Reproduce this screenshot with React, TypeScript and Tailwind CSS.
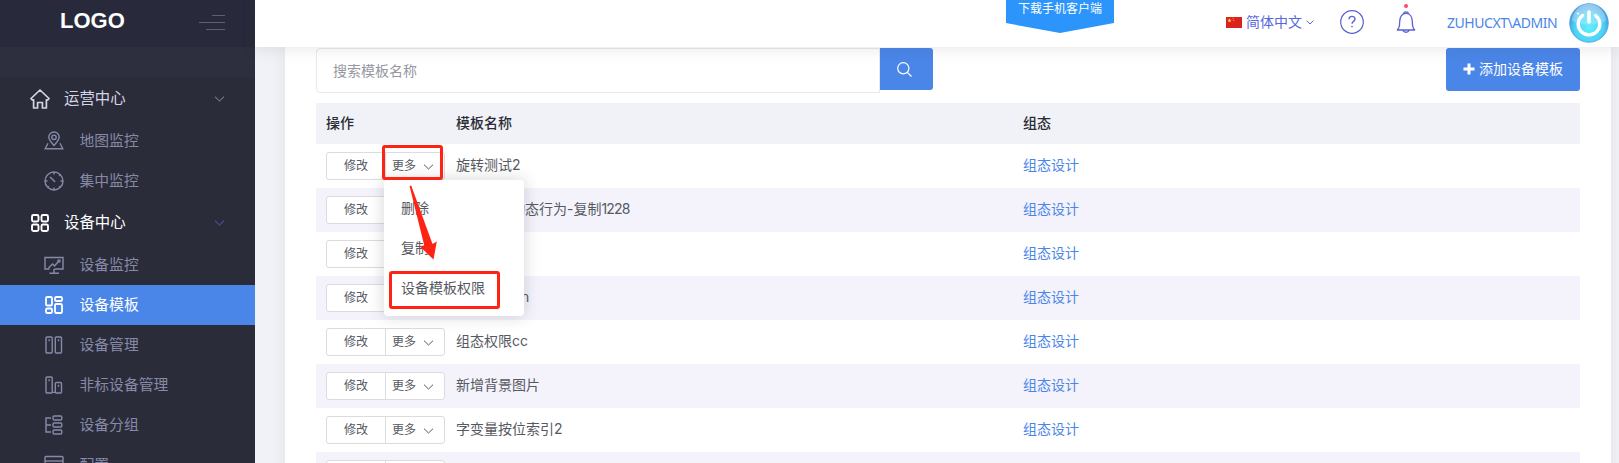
import React from "react";

type IconProps = { className?: string };

const Svg = ({ className = "", size = 20, children }: { className?: string; size?: number; children: React.ReactNode }) => (
  <svg width={size} height={size} viewBox="0 0 20 20" fill="none" stroke="currentColor" strokeWidth="1.4" className={`shrink-0 ${className}`}>
    {children}
  </svg>
);

const HomeIcon = () => (
  <Svg>
    <path strokeWidth="1.7" strokeLinejoin="round" d="M10 1 1 9.500l1 1.300h1.600V19h4v-5.500h4.800V19h4v-8.200h1.600l1-1.300z" />
  </Svg>
);
const GridIcon = () => (
  <Svg>
    <g strokeWidth="1.9">
      <rect x="2" y="2" width="6.500" height="6.500" rx="1.500" />
      <rect x="11.500" y="2" width="6.500" height="6.500" rx="1.500" />
      <rect x="2" y="11.500" width="6.500" height="6.500" rx="1.500" />
      <rect x="11.500" y="11.500" width="6.500" height="6.500" rx="1.500" />
    </g>
  </Svg>
);
const MapIcon = () => (
  <Svg>
    <path d="M10 14.500C6.500 10.500 4.800 8.600 4.800 6.200a5.200 5.200 0 0 1 10.400 0c0 2.400-1.700 4.300-5.200 8.300z" />
    <circle cx="10" cy="6.300" r="2.200" />
    <path d="M4 12.200 1.200 17.800h17.600L16 12.200" />
  </Svg>
);
const ClockIcon = () => (
  <Svg>
    <circle cx="10" cy="10" r="9" />
    <path d="M6 6l5.200 5M10 1v2.500M10 16.500V19M1 10h2.500M16.500 10H19M15.200 4.800l1-1M3.800 16.200l1-1M15.200 15.200l1 1" />
  </Svg>
);
const MonitorIcon = () => (
  <Svg>
    <path d="M5.500 14H1V2.500h18V14h-8.500M10 14v4M5.500 18.200h9.500M4.500 13l4-4 2 2 4-4.500" />
    <circle cx="15" cy="6" r="1.100" />
  </Svg>
);
const TemplateIcon = () => (
  <Svg>
    <g strokeWidth="1.8">
      <rect x="2" y="2" width="6" height="8.500" rx="1.300" />
      <rect x="11" y="2" width="7" height="4" rx="1.300" />
      <rect x="2" y="13.500" width="6" height="4.500" rx="1.300" />
      <rect x="11" y="9" width="7" height="9" rx="1.300" />
    </g>
  </Svg>
);
const ColumnsIcon = () => (
  <Svg>
    <rect x="2" y="2" width="6.200" height="16" rx="1" />
    <rect x="11.300" y="2" width="6.200" height="16" rx="1" />
    <path d="M5.200 4.200v2M14.500 4.200v2" />
  </Svg>
);
const BarsIcon = () => (
  <Svg>
    <rect x="2" y="2" width="6.200" height="16" rx="1" />
    <rect x="11.300" y="7.500" width="6.200" height="10.500" rx="1" />
    <path d="M5.200 4.200v2M14.500 9.700v2M8.200 17.400h3" />
  </Svg>
);
const TreeIcon = () => (
  <Svg>
    <path d="M7 3H2v14h5M2 10h5" />
    <rect x="9" y="1" width="8.800" height="4" rx="1.200" />
    <rect x="9" y="8" width="8.800" height="4" rx="1.200" />
    <rect x="9" y="15" width="8.800" height="4" rx="1.200" />
  </Svg>
);
const ConfigIcon = () => (
  <Svg>
    <rect x="1" y="1.500" width="18" height="16" rx="1" />
    <path d="M1 6h18" />
  </Svg>
);
const Chevron = ({ className = "" }: IconProps) => (
  <svg width="11" height="6" viewBox="0 0 11 6" fill="none" stroke="currentColor" strokeWidth="1" className={`shrink-0 ${className}`}>
    <path d="M1 .7l4.500 4.300L10 .7" />
  </svg>
);

const Section = ({ icon, label, active }: { icon: React.ReactNode; label: string; active?: boolean }) => (
  <div className={`flex h-11 shrink-0 items-center pl-[30px] pr-[30px] text-[15.4px] ${active ? "text-white" : "text-[#d3d5e5]"}`}>
    {icon}
    <span className="ml-[14px]">{label}</span>
    <Chevron className={`ml-auto ${active ? "text-[#5d5fc9]" : "text-[#8f92ae]"}`} />
  </div>
);

const Item = ({ icon, label, active }: { icon: React.ReactNode; label: string; active?: boolean }) => (
  <div className={`flex h-10 shrink-0 items-center pl-[44px] text-[14.8px] ${active ? "bg-[#4a86e8] text-white" : "text-[#868aa8]"}`}>
    {icon}
    <span className="ml-[15.500px]">{label}</span>
  </div>
);

const Sidebar = () => (
  <aside className="flex w-[255px] shrink-0 flex-col overflow-hidden bg-[#2b2c39]">
    <div className="flex h-[47px] shrink-0 items-center bg-[#282a3c] pb-[5px] pl-[60px] pr-[30px]">
      <span className="font-['Liberation_Sans'] text-[22px] font-bold leading-none text-white">LOGO</span>
      <div className="ml-auto flex flex-col items-end gap-[6px] pt-[3px]">
        <i className="h-px w-[13px] bg-[#5d5f77]" />
        <i className="h-px w-[26px] bg-[#5d5f77]" />
        <i className="h-px w-[19px] bg-[#5d5f77]" />
      </div>
    </div>
    <div className="h-[30px] shrink-0 bg-[#2d2f3e]" />
    <Section icon={<HomeIcon />} label="运营中心" />
    <Item icon={<MapIcon />} label="地图监控" />
    <Item icon={<ClockIcon />} label="集中监控" />
    <Section icon={<GridIcon />} label="设备中心" active />
    <Item icon={<MonitorIcon />} label="设备监控" />
    <Item icon={<TemplateIcon />} label="设备模板" active />
    <Item icon={<ColumnsIcon />} label="设备管理" />
    <Item icon={<BarsIcon />} label="非标设备管理" />
    <Item icon={<TreeIcon />} label="设备分组" />
    <Item icon={<ConfigIcon />} label="配置" />
  </aside>
);

const PowerAvatar = () => (
  <svg width="40" height="40" viewBox="0 0 40 40" className="shrink-0">
    <defs>
      <radialGradient id="orb" cx="50%" cy="62%" r="58%">
        <stop offset="0" stopColor="#5df0fb" />
        <stop offset=".65" stopColor="#4fd0f5" />
        <stop offset="1" stopColor="#3a94dc" />
      </radialGradient>
      <linearGradient id="gloss" x1="0" y1="0" x2="0" y2="1">
        <stop offset="0" stopColor="#fff" stopOpacity=".5" />
        <stop offset="1" stopColor="#fff" stopOpacity=".2" />
      </linearGradient>
    </defs>
    <circle cx="20" cy="20" r="19.300" fill="url(#orb)" stroke="#4a9fdc" strokeWidth=".8" />
    <path d="M3 18a17 17 0 0 1 34 0c-10 5-24 5-34 0z" fill="url(#gloss)" />
    <circle cx="9" cy="10.500" r="1.300" fill="#fff" fillOpacity=".8" />
    <path d="M13.500 12.500a10.800 10.800 0 1 0 13 0" fill="none" stroke="#fff" strokeWidth="3.400" strokeLinecap="round" />
    <path d="M20 9v10" stroke="#fff" strokeWidth="3.600" strokeLinecap="round" />
  </svg>
);

const Header = () => (
  <header className="relative z-10 flex h-[47px] shrink-0 bg-white shadow-[0_1px_14px_1px_rgba(69,65,78,0.12)]">
    <div className="ml-[751px] h-[33px] w-[108px] bg-[#2b95fb] text-center text-[12px] leading-[17px] text-white [clip-path:polygon(0_0,100%_0,100%_70%,50%_100%,0_70%)]">
      下载手机客户端
    </div>
    <div className="ml-auto flex items-center pb-[3px] pr-[10px]">
      <svg width="16" height="11" viewBox="0 0 16 11">
        <rect width="16" height="11" fill="#d9231c" />
        <path d="M3.500 1.300l.6 1.500h1.500l-1.200 1 .5 1.500-1.400-.9-1.400.9.5-1.500-1.200-1h1.500z" fill="#ffd83a" />
        <path d="M6.500 1h1v1h-1zM7.300 3h1v1h-1z" fill="#f7b42c" />
      </svg>
      <span className="ml-1 pb-px text-[14px] text-[#5867dd]">简体中文</span>
      <svg width="8" height="5" viewBox="0 0 8 5" fill="none" stroke="#5867dd" className="ml-1">
        <path d="M.6.6L4 4 7.400.6" />
      </svg>
      <svg width="24" height="24" viewBox="0 0 24 24" fill="none" stroke="#5b62d3" strokeWidth="1.200" className="ml-[26px]">
        <circle cx="12" cy="12" r="11.300" />
        <path strokeWidth="1.400" d="M9 9.300c0-4 6-3.800 6-.3 0 2.300-3 2.400-3 4.800M12 15.800v1.500" />
      </svg>
      <div className="relative ml-8 h-6 w-5">
        <svg width="20" height="24" viewBox="0 0 20 24" fill="none" stroke="#5b62d3" strokeWidth="1.300">
          <path strokeLinejoin="round" d="M1.300 20c2-1.600 2.400-3 2.400-8.500C3.700 6.500 6.300 3.300 10 3.300s6.300 3.200 6.300 8.200c0 5.500.4 6.900 2.400 8.500zM7.500 3.500c.3-2.300 4.700-2.300 5 0M7 20.500c.8 2.300 5.200 2.300 6 0" />
        </svg>
        <i className="absolute -top-[6px] left-2 h-1 w-1 rounded-full bg-[#fd4a6d]" />
      </div>
      <span className="ml-[31px] w-[110px] whitespace-nowrap font-['Noto_Sans'] text-[14px] tracking-[-0.45px] text-[#4a86e8]">ZUHUCXT\ADMIN</span>
      <span className="ml-3 flex pt-[2px]">
        <PowerAvatar />
      </span>
    </div>
  </header>
);

type Row = { name: string; num?: string; pad?: string; open?: boolean; covered?: boolean };

const rows: Row[] = [
  { name: "旋转测试2", open: true },
  { name: "动态行为-复制", num: "1228", pad: "pl-[55px]", covered: true },
  { name: "", covered: true },
  { name: "n", pad: "pl-[65px]", covered: true },
  { name: "组态权限cc" },
  { name: "新增背景图片" },
  { name: "字变量按位索引2" },
  { name: "" },
];

const Menu = () => (
  <div className="absolute left-[57px] top-[27px] z-20 h-[136px] w-[140px] rounded bg-white pl-[17px] pt-[7px] text-[14px] text-[#575962] shadow-[0_0_15px_1px_rgba(69,65,78,0.2)]">
    <div className="flex h-10 items-center">删除</div>
    <div className="flex h-10 items-center">复制</div>
    <div className="flex h-[41px] items-center">设备模板权限</div>
    <div className="absolute left-[5px] top-[91px] h-[38px] w-[111px] rounded-[3px] border-3 border-[#fe2312]" />
    <div className="absolute -left-[2px] -top-[35px] h-[35px] w-[61px] rounded-[3px] border-3 border-[#fe2312]" />
    <svg width="34" height="78" viewBox="0 0 34 78" className="absolute left-5 top-1">
      <path d="M5.500 1.800h1.800L28.500 60l4.300-2.500L29.500 75.500 16 62.500l4.200-1.300z" fill="#fe2312" />
    </svg>
  </div>
);

const Table = () => (
  <div className="mt-[10px]">
    <div className="flex h-[41px] items-center bg-[#f1f2f8] pb-[2px] text-[14px] font-medium text-[#2b2b33]">
      <span className="w-[140px] pl-[10px]">操作</span>
      <span className="w-[567px]">模板名称</span>
      <span>组态</span>
    </div>
    {rows.map((r, i) => (
      <div key={i} className={`flex h-11 items-center pl-[10px] text-[14px] text-[#575962] ${i % 2 ? "bg-[#f4f3fb]" : "bg-white"}`}>
        <div className="relative flex h-7 w-[119px] rounded-[3px] border border-[#dcdcdf] bg-white text-[12px]">
          <span className="flex w-[59px] items-center justify-center border-r border-[#dcdcdf]">修改</span>
          {!r.covered && (
            <span className="flex items-center pl-[6px]">
              更多
              <Chevron className="ml-[7px] mt-[2px]" />
            </span>
          )}
          {r.open && <Menu />}
        </div>
        <span className={`ml-[11px] w-[567px] pb-[3px] ${r.pad ?? ""}`}>
          {r.name}
          {r.num && <span className="tracking-[-0.8px]">{r.num}</span>}
        </span>
        <span className="pb-[3px] text-[#4a86e8]">组态设计</span>
      </div>
    ))}
  </div>
);

export default function App() {
  return (
    <div className="flex h-[463px] w-[1619px] overflow-hidden bg-[#f1f2f7] font-['Inter','Noto_Sans_CJK_SC',sans-serif]">
      <Sidebar />
      <div className="flex min-w-0 flex-1 flex-col">
        <Header />
        <main className="ml-[30px] mr-2 flex-1 bg-white px-[31px] pt-px shadow-[0_1px_15px_1px_rgba(69,65,78,0.08)]">
          <div className="flex h-[45px] items-start">
            <div className="flex h-[45px] w-[564px] items-center rounded-l border border-[#e7e8f0] pl-4 text-[14px] text-[#96979f]">搜索模板名称</div>
            <button className="flex h-[42px] w-[53px] items-center justify-center rounded-r-[3px] bg-[#4a86e8] pr-1 text-white">
              <svg width="15" height="15" viewBox="0 0 15 15" fill="none" stroke="currentColor" strokeWidth="1.200">
                <circle cx="6.300" cy="6.300" r="5.600" />
                <path d="M10.300 10.300l4.200 4.200" />
              </svg>
            </button>
            <button className="ml-auto flex h-[43px] w-[134px] items-center rounded-[3px] bg-[#4a86e8] pb-[2px] pl-[17px] text-[14px] text-white">
              <svg width="12" height="12" viewBox="0 0 12 12" stroke="currentColor" strokeWidth="3">
                <path d="M6 .5v11M.5 6h11" />
              </svg>
              <span className="ml-[4px]">添加设备模板</span>
            </button>
          </div>
          <Table />
        </main>
      </div>
    </div>
  );
}
